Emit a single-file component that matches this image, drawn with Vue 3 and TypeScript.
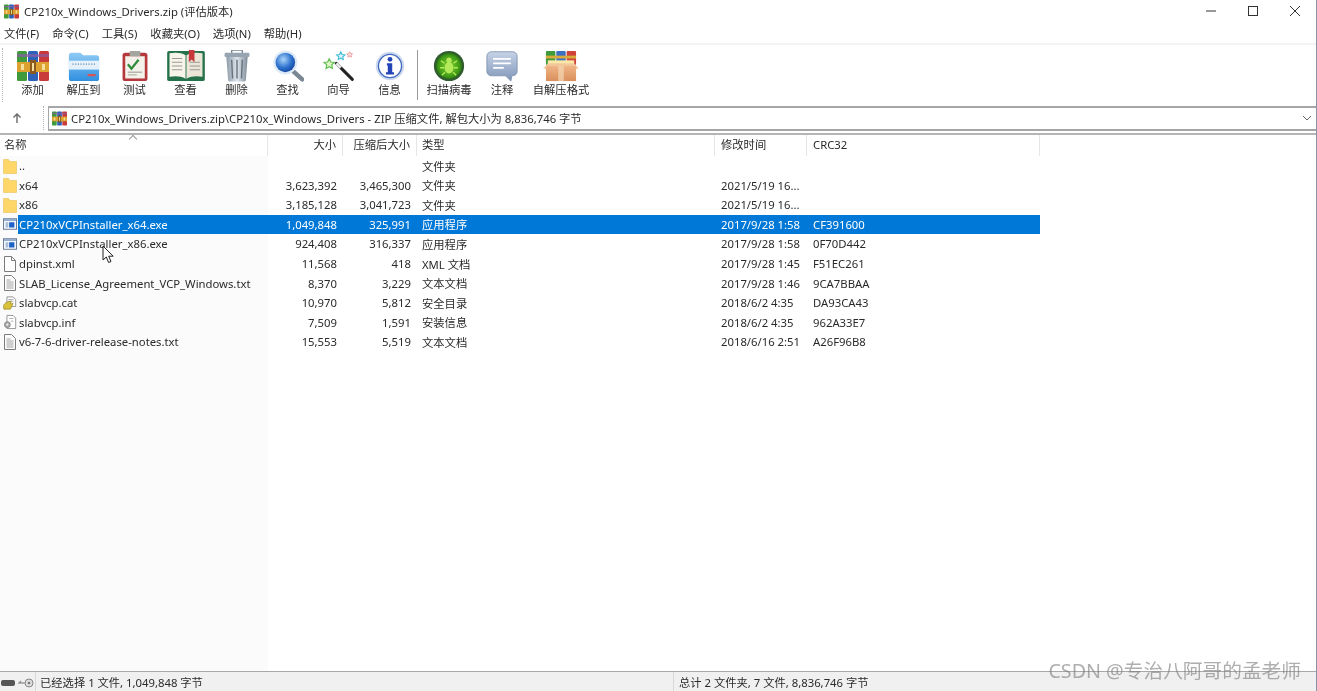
<script setup lang="ts">
type Row = {
  name: string
  size: string
  packed: string
  type: string
  modified: string
  crc: string
  icon: 'folder' | 'exe' | 'file' | 'text' | 'cat' | 'inf'
  selected?: boolean
}

const menus = ['文件(F)', '命令(C)', '工具(S)', '收藏夹(O)', '选项(N)', '帮助(H)']

const tools = [
  { id: 'add', label: '添加', width: 51 },
  { id: 'extract', label: '解压到', width: 51 },
  { id: 'test', label: '测试', width: 51 },
  { id: 'view', label: '查看', width: 51 },
  { id: 'delete', label: '删除', width: 51 },
  { id: 'find', label: '查找', width: 51 },
  { id: 'wizard', label: '向导', width: 51 },
  { id: 'info', label: '信息', width: 51 },
  { id: 'sep', label: '', width: 5 },
  { id: 'scan', label: '扫描病毒', width: 58 },
  { id: 'note', label: '注释', width: 48 },
  { id: 'sfx', label: '自解压格式', width: 70 },
]

const rows: Row[] = [
  { name: '..', size: '', packed: '', type: '文件夹', modified: '', crc: '', icon: 'folder' },
  { name: 'x64', size: '3,623,392', packed: '3,465,300', type: '文件夹', modified: '2021/5/19 16...', crc: '', icon: 'folder' },
  { name: 'x86', size: '3,185,128', packed: '3,041,723', type: '文件夹', modified: '2021/5/19 16...', crc: '', icon: 'folder' },
  { name: 'CP210xVCPInstaller_x64.exe', size: '1,049,848', packed: '325,991', type: '应用程序', modified: '2017/9/28 1:58', crc: 'CF391600', icon: 'exe', selected: true },
  { name: 'CP210xVCPInstaller_x86.exe', size: '924,408', packed: '316,337', type: '应用程序', modified: '2017/9/28 1:58', crc: '0F70D442', icon: 'exe' },
  { name: 'dpinst.xml', size: '11,568', packed: '418', type: 'XML 文档', modified: '2017/9/28 1:45', crc: 'F51EC261', icon: 'file' },
  { name: 'SLAB_License_Agreement_VCP_Windows.txt', size: '8,370', packed: '3,229', type: '文本文档', modified: '2017/9/28 1:46', crc: '9CA7BBAA', icon: 'text' },
  { name: 'slabvcp.cat', size: '10,970', packed: '5,812', type: '安全目录', modified: '2018/6/2 4:35', crc: 'DA93CA43', icon: 'cat' },
  { name: 'slabvcp.inf', size: '7,509', packed: '1,591', type: '安装信息', modified: '2018/6/2 4:35', crc: '962A33E7', icon: 'inf' },
  { name: 'v6-7-6-driver-release-notes.txt', size: '15,553', packed: '5,519', type: '文本文档', modified: '2018/6/16 2:51', crc: 'A26F96B8', icon: 'text' },
]
</script>

<template>
  <div class="win">
    <svg class="defs" width="0" height="0" aria-hidden="true">
      <defs>
        <symbol id="rar" viewBox="0 0 32 32">
          <rect x="0" y="1" width="10" height="30" rx="1.5" fill="#3f9a3c" />
          <rect x="11" y="1" width="10" height="30" rx="1.5" fill="#2c62b8" />
          <rect x="22" y="1" width="10" height="30" rx="1.5" fill="#c93a3a" />
          <rect x="0" y="4" width="32" height="3" fill="#8a5ca8" opacity=".7" />
          <rect x="0" y="12" width="32" height="10" fill="#dca12f" />
          <rect x="13" y="10" width="6" height="14" fill="#8b5a1c" />
          <rect x="15" y="13" width="2" height="8" fill="#f5df9c" />
          <rect x="4" y="14" width="3" height="6" fill="#f5df9c" />
          <rect x="25" y="14" width="3" height="6" fill="#f5df9c" />
        </symbol>
        <symbol id="folder" viewBox="0 0 14 16">
          <path d="M0.5 1.5h5l1.5 2h6.500v12H0.5z" fill="#ffd768" stroke="#e8c25a" stroke-width=".6" />
        </symbol>
        <symbol id="exe" viewBox="0 0 16 14">
          <rect x=".5" y="1" width="15" height="12" fill="#f4f6fa" stroke="#5b6f8c" />
          <rect x="1" y="1.5" width="14" height="2" fill="#8ba7cc" />
          <rect x="3" y="5" width="3" height="6" fill="#a9bdd6" />
          <rect x="7" y="5" width="6" height="6" fill="#1d62c4" />
        </symbol>
        <symbol id="file" viewBox="0 0 14 16">
          <path d="M1.5.5h7l4 4v11h-11z" fill="#fff" stroke="#7c7c7c" />
          <path d="M8.5.5v4h4" fill="none" stroke="#7c7c7c" />
        </symbol>
        <symbol id="text" viewBox="0 0 14 16">
          <path d="M1.5.5h7l4 4v11h-11z" fill="#fbfbfb" stroke="#7c7c7c" />
          <path d="M3.5 5h4M3.5 7h7M3.5 9h7M3.5 11h7M3.5 13h7" stroke="#9a9a9a" stroke-width=".9" />
        </symbol>
        <symbol id="cat" viewBox="0 0 16 16">
          <path d="M4.5 1h7l3 3v8h-10z" fill="#fff" stroke="#8a8a8a" />
          <path d="M6 4h6M6 6h6" stroke="#aaa" />
          <path d="M0.5 11c2-4 6-5 9-5l-1 3 3-.5-3 6.5H1z" fill="#d9c23a" stroke="#8d7d1e" stroke-width=".7" />
        </symbol>
        <symbol id="inf" viewBox="0 0 16 16">
          <path d="M4.5.5h7l3 3v12h-10z" fill="#fff" stroke="#8a8a8a" />
          <path d="M7 4h5M9 7h3" stroke="#aaa" />
          <circle cx="5" cy="11" r="3.4" fill="#a9a9a9" stroke="#777" stroke-width=".8" />
          <circle cx="5" cy="11" r="1.2" fill="#eee" />
        </symbol>
        <linearGradient id="gFolder" x1="0" y1="0" x2="0" y2="1"><stop offset="0" stop-color="#8ecbf5" /><stop offset="1" stop-color="#2f8fe0" /></linearGradient>
        <linearGradient id="gTrash" x1="0" y1="0" x2="1" y2="0"><stop offset="0" stop-color="#8d9aa8" /><stop offset=".5" stop-color="#dfe6ec" /><stop offset="1" stop-color="#7e8b99" /></linearGradient>
        <radialGradient id="gLens" cx=".4" cy=".35" r=".7"><stop offset="0" stop-color="#a9d4f7" /><stop offset=".6" stop-color="#2e72cf" /><stop offset="1" stop-color="#12459c" /></radialGradient>
        <radialGradient id="gVirus" cx=".5" cy=".5" r=".55"><stop offset="0" stop-color="#7fd32d" /><stop offset=".75" stop-color="#3f9a16" /><stop offset="1" stop-color="#1d5f14" /></radialGradient>
        <linearGradient id="gNote" x1="0" y1="0" x2="0" y2="1"><stop offset="0" stop-color="#c6d3e6" /><stop offset="1" stop-color="#7f95b8" /></linearGradient>
        <linearGradient id="gBox" x1="0" y1="0" x2="0" y2="1"><stop offset="0" stop-color="#f0b485" /><stop offset="1" stop-color="#d98f5c" /></linearGradient>
      </defs>
    </svg>

    <header class="titlebar">
      <svg class="title-icon"><use href="#rar" /></svg>
      <span class="title-text">CP210x_Windows_Drivers.zip (评估版本)</span>
      <div class="caption">
        <svg width="12" height="12" viewBox="0 0 12 12"><path d="M1 6h10" stroke="#333" stroke-width="1" /></svg>
        <svg width="12" height="12" viewBox="0 0 12 12"><rect x="1.500" y="1.500" width="9" height="9" fill="none" stroke="#333" /></svg>
        <svg width="12" height="12" viewBox="0 0 12 12"><path d="M1 1l10 10M11 1L1 11" stroke="#333" stroke-width="1" /></svg>
      </div>
    </header>

    <nav class="menubar">
      <span v-for="m in menus" :key="m">{{ m }}</span>
    </nav>

    <section class="toolbar">
      <i class="grip" />
      <template v-for="t in tools" :key="t.id">
        <i v-if="t.id === 'sep'" class="tool-sep" />
        <button v-else class="tool" type="button" :style="{ width: t.width + 'px' }">
          <svg v-if="t.id === 'add'" class="tool-icon" viewBox="0 0 32 32"><use href="#rar" width="32" height="32" /></svg>
          <svg v-else-if="t.id === 'extract'" class="tool-icon" viewBox="0 0 36 36">
            <path d="M1 6a3 3 0 013-3h10l3 3h15a3 3 0 013 3v23a3 3 0 01-3 3H4a3 3 0 01-3-3z" fill="url(#gFolder)" />
            <rect x="1" y="12" width="34" height="10" fill="#e4f1fb" />
            <path d="M5 16h26" stroke="#6b8fb0" stroke-width="1.4" stroke-dasharray="1.4 1.6" />
            <rect x="22" y="27" width="9" height="2.5" fill="#d9534f" />
          </svg>
          <svg v-else-if="t.id === 'test'" class="tool-icon" viewBox="0 0 36 36">
            <rect x="4" y="3" width="28" height="32" rx="3" fill="#b5383c" />
            <rect x="7" y="7" width="22" height="25" fill="#f4f1ea" />
            <rect x="12" y="1" width="12" height="6" rx="1" fill="#a5a5a0" />
            <path d="M10 16l4 5 8-10" fill="none" stroke="#2f8d3a" stroke-width="2.6" />
            <path d="M10 25h16M10 28h10" stroke="#b5b5ad" stroke-width="1.5" />
          </svg>
          <svg v-else-if="t.id === 'view'" class="tool-icon big" viewBox="0 0 40 34">
            <rect x="0" y="1" width="40" height="32" rx="2" fill="#25724a" />
            <path d="M2.500 3.500c6-1 12-1 17 2v25c-5-3-11-3-17-2z" fill="#f7f4ea" />
            <path d="M37.500 3.500c-6-1-12-1-17 2v25c5-3 11-3 17-2z" fill="#ebe6d8" />
            <path d="M5 9h11M5 13h11M5 17h11M5 21h11M24 13h11M24 17h11M24 21h11" stroke="#9a9a92" stroke-width="1.100" />
            <path d="M23 0h6v13l-3-3-3 3z" fill="#c7383c" />
          </svg>
          <svg v-else-if="t.id === 'delete'" class="tool-icon" viewBox="0 0 36 36">
            <rect x="12" y="0" width="12" height="4" rx="1" fill="none" stroke="#788592" stroke-width="1.500" />
            <rect x="4" y="3" width="28" height="5" rx="1.500" fill="#97a4b1" />
            <path d="M6 8h24l-2 26a2 2 0 01-2 1.500H10a2 2 0 01-2-1.500z" fill="url(#gTrash)" />
            <path d="M12 11l1 21M18 11v21M24 11l-1 21" stroke="#66737f" stroke-width="1.600" />
          </svg>
          <svg v-else-if="t.id === 'find'" class="tool-icon" viewBox="0 0 36 36">
            <path d="M24 24l10 9" stroke="#7c8794" stroke-width="5" stroke-linecap="round" />
            <circle cx="15" cy="14" r="13.500" fill="#dce9f6" />
            <circle cx="15" cy="14" r="11" fill="url(#gLens)" />
          </svg>
          <svg v-else-if="t.id === 'wizard'" class="tool-icon" viewBox="0 0 36 36">
            <path d="M15 15l18 18" stroke="#222" stroke-width="3.400" stroke-linecap="round" />
            <path d="M15 15l5 5" stroke="#e6e6e6" stroke-width="3.400" />
            <path d="M7 10l1.800 3.600 4 .5-3 2.700.8 4-3.600-2-3.600 2 .8-4-3-2.700 4-.5z" fill="#dff5c8" stroke="#5cbe4a" stroke-width="1.300" />
            <path d="M20 2l1.400 3 3.300.4-2.400 2.200.6 3.200-2.900-1.600-2.900 1.600.6-3.200-2.400-2.200 3.300-.4z" fill="#d7f2fa" stroke="#45bcd8" stroke-width="1.200" />
            <path d="M30 2l1 2 2.200.3-1.600 1.500.4 2.200-2-1.100-2 1.100.4-2.200-1.600-1.500 2.200-.3z" fill="#fde3e3" stroke="#ea9a9a" stroke-width="1" />
          </svg>
          <svg v-else-if="t.id === 'info'" class="tool-icon" viewBox="0 0 36 36">
            <circle cx="18" cy="18" r="16" fill="#cdd9f0" />
            <circle cx="18" cy="18" r="13" fill="#fff" stroke="#4068bc" stroke-width="1.500" />
            <circle cx="18" cy="10.500" r="2.700" fill="#2345b8" />
            <path d="M14.500 15h6v10h2v2.500h-9V25h2v-7.500h-1z" fill="#2345b8" />
          </svg>
          <svg v-else-if="t.id === 'scan'" class="tool-icon" viewBox="0 0 36 36">
            <circle cx="18" cy="18" r="17" fill="#315c30" />
            <circle cx="18" cy="18" r="14.500" fill="url(#gVirus)" />
            <ellipse cx="18" cy="20" rx="5" ry="6.500" fill="#b4ea5a" />
            <circle cx="18" cy="11.500" r="3" fill="#b4ea5a" />
            <path d="M13 15l-4-3M23 15l4-3M12.500 20H8M23.500 20H28M13.500 25l-3.500 3.500M22.500 25l3.500 3.500" stroke="#b4ea5a" stroke-width="1.500" />
          </svg>
          <svg v-else-if="t.id === 'note'" class="tool-icon" viewBox="0 0 36 36">
            <path d="M6 2h24a5 5 0 015 5v17a5 5 0 01-5 5h-1l-1 6-6-6H6a5 5 0 01-5-5V7a5 5 0 015-5z" fill="url(#gNote)" stroke="#8093ae" />
            <path d="M8 10h20M8 15h20M8 20h12" stroke="#fff" stroke-width="2" />
          </svg>
          <svg v-else-if="t.id === 'sfx'" class="tool-icon big" viewBox="0 0 40 34">
            <rect x="4" y="1" width="10" height="15" rx="1" fill="#3f9a3c" />
            <rect x="15" y="1" width="10" height="15" rx="1" fill="#3b6fc0" />
            <rect x="26" y="1" width="10" height="15" rx="1" fill="#d0423c" />
            <rect x="4" y="6" width="32" height="3" fill="#d9ab3c" />
            <rect x="6" y="11" width="28" height="6" fill="#fbe9a8" />
            <path d="M6 14h28l5 6H1z" fill="#f2c89b" />
            <rect x="4" y="17" width="32" height="16" fill="url(#gBox)" />
            <path d="M17 17h6v16h-6z" fill="#f3d7b5" opacity=".7" />
          </svg>
          <span class="tool-label">{{ t.label }}</span>
        </button>
      </template>
    </section>

    <section class="addr-row">
      <svg class="up" width="12" height="12" viewBox="0 0 12 12"><path d="M6 11V2M2.500 5.500L6 2l3.500 3.500" fill="none" stroke="#6a6a6a" stroke-width="1.400" /></svg>
      <i class="addr-grip" />
      <div class="addr">
        <svg class="addr-icon"><use href="#rar" /></svg>
        <span class="addr-text">CP210x_Windows_Drivers.zip\CP210x_Windows_Drivers - ZIP 压缩文件, 解包大小为 8,836,746 字节</span>
        <svg class="chev" width="10" height="6" viewBox="0 0 10 6"><path d="M1 1l4 4 4-4" fill="none" stroke="#666" /></svg>
      </div>
    </section>

    <section class="list">
      <div class="row head">
        <span class="c name">名称<i class="sort" /></span>
        <span class="c size">大小</span>
        <span class="c packed">压缩后大小</span>
        <span class="c type">类型</span>
        <span class="c modified">修改时间</span>
        <span class="c crc">CRC32</span>
      </div>
      <div class="body">
        <div v-for="r in rows" :key="r.name" class="row item" :class="{ selected: r.selected }">
          <span class="c name">
            <svg class="file-icon"><use :href="'#' + r.icon" /></svg>
            <span class="name-text">{{ r.name }}</span>
          </span>
          <span class="c size">{{ r.size }}</span>
          <span class="c packed">{{ r.packed }}</span>
          <span class="c type">{{ r.type }}</span>
          <span class="c modified">{{ r.modified }}</span>
          <span class="c crc">{{ r.crc }}</span>
        </div>
      </div>
      <svg class="cursor" width="13" height="19" viewBox="0 0 13 19">
        <path d="M1 1v14l3.300-3 2.300 5.500 2.400-1-2.300-5.300h4.500z" fill="#fff" stroke="#222" stroke-width="1" stroke-linejoin="round" />
      </svg>
    </section>

    <footer class="status">
      <div class="st-left">
        <svg width="14" height="6" viewBox="0 0 14 6"><rect width="14" height="6" rx="2" fill="#555" /></svg>
        <svg width="16" height="10" viewBox="0 0 16 10">
          <circle cx="11" cy="5" r="4" fill="#ddd" stroke="#888" />
          <circle cx="11" cy="5" r="1.300" fill="#777" />
          <path d="M7 5H1l2-2" fill="none" stroke="#999" stroke-width="1.500" />
        </svg>
      </div>
      <div class="st-a">已经选择 1 文件, 1,049,848 字节</div>
      <div class="st-b">总计 2 文件夹, 7 文件, 8,836,746 字节</div>
    </footer>

    <div class="mark">CSDN @专治八阿哥的孟老师</div>
  </div>
</template>

<style>
html, body { margin: 0; background: #fff; overflow: hidden; }
</style>

<style scoped>
.win { position: relative; width: 1317px; height: 691px; display: flex; flex-direction: column; overflow: hidden; background: #fff; color: #2a2a2a; font: 11.3px "Noto Sans", "Noto Sans CJK SC", sans-serif; box-sizing: border-box; border-right: 1px solid #8c90a8; filter: blur(.4px); }
.defs { position: absolute; }
.titlebar { height: 22px; display: flex; align-items: center; padding-left: 4px; flex: none; }
.title-icon { width: 15px; height: 15px; margin-right: 5px; }
.caption { margin-left: auto; width: 96px; margin-right: 15px; display: flex; justify-content: space-between; }
.menubar { height: 21px; flex: none; display: flex; align-items: center; padding-left: 4px; gap: 13px; border-bottom: 2px solid #f3f3f3; }
.toolbar { height: 59px; flex: none; display: flex; align-items: flex-start; padding: 5px 0 0 7px; position: relative; box-sizing: border-box; }
.grip { position: absolute; left: 2px; top: 3px; height: 54px; border-left: 1px dotted #b5b5b5; }
.tool { height: 50px; padding: 0; border: 0; background: none; font: inherit; color: inherit; display: flex; flex-direction: column; align-items: center; flex: none; }
.tool-icon { width: 32px; height: 32px; display: block; }
.tool-icon.big { width: 40px; height: 32px; }
.tool-label { line-height: 16px; }
.tool-sep { width: 1px; height: 50px; margin: 0 2px; background: #9a9a9a; flex: none; }
.addr-row { height: 28px; flex: none; display: flex; align-items: center; position: relative; box-sizing: border-box; padding-left: 11px; }
.up { flex: none; }
.addr-grip { height: 24px; border-left: 1px dotted #b5b5b5; margin: 0 4px 0 20px; }
.addr { flex: 1; height: 25px; box-sizing: border-box; border: 1px solid #a6a6a6; border-top-width: 2px; border-bottom-width: 2px; border-right: 0; display: flex; align-items: center; padding-left: 3px; }
.addr-icon { width: 15px; height: 15px; margin-right: 4px; flex: none; }
.addr-text { white-space: nowrap; }
.chev { margin-left: auto; margin-right: 4px; }
.list { flex: 1; position: relative; min-height: 0; display: flex; flex-direction: column; border-top: 2px solid #b4b4b4; margin-top: 1px; }
.row { display: flex; align-items: center; height: 19.55px; white-space: nowrap; }
.head { height: 21px; flex: none; }
.head .c { height: 21px; line-height: 20px; border-right: 1px solid #e6e6e6; }
.c { display: block; flex: none; box-sizing: border-box; padding: 0 6px 0 5px; overflow: hidden; }
.name { width: 268px; position: relative; }
.item .name { display: flex; align-items: center; padding: 0 0 0 3px; overflow: visible; }
.size { width: 75px; text-align: right; }
.packed { width: 74px; text-align: right; }
.type { width: 298px; }
.modified { width: 92px; padding-left: 6px; }
.crc { width: 233px; padding-left: 6px; }
.head .name { padding-left: 4px; }
.sort { position: absolute; left: 129px; top: 0; width: 7px; height: 4px; }
.sort::before { content: ""; display: block; width: 5px; height: 5px; border-left: 1px solid #999; border-top: 1px solid #999; transform: rotate(45deg); margin: 1px 0 0 1px; }
.body { flex: 1; min-height: 0; background: linear-gradient(to right, #fbfbfb 268px, #fff 268px); }
.file-icon { width: 14px; height: 16px; flex: none; margin-right: 2px; }
.name-text { line-height: 19px; }
.item.selected { background: linear-gradient(to right, transparent 18px, #0078d7 18px, #0078d7 1040px, transparent 1040px); color: #fff; }
.cursor { position: absolute; left: 102px; top: 110px; }
.status { height: 19px; flex: none; display: flex; background: #f0f0f0; border-top: 1px solid #a8a8a8; }
.st-left { width: 36px; padding: 2px 0 0 1px; box-sizing: border-box; display: flex; align-items: center; gap: 3px; border-right: 1px solid #d8d8d8; flex: none; }
.st-a { width: 638px; padding-left: 4px; box-sizing: border-box; border-right: 1px solid #d8d8d8; line-height: 22px; flex: none; }
.st-b { padding-left: 5px; line-height: 22px; }
.mark { position: absolute; right: 15px; top: 659px; font-size: 19.7px; line-height: 24px; color: rgba(120, 120, 120, .6); white-space: nowrap; }
</style>
